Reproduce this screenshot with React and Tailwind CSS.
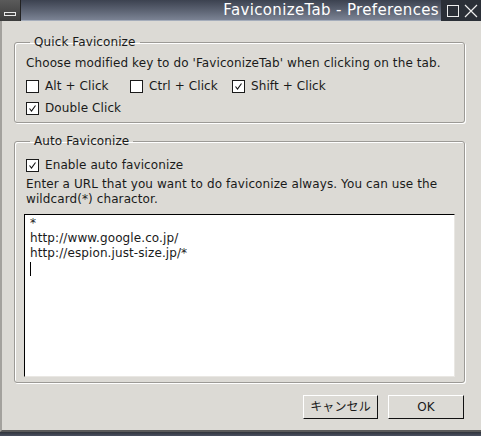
const Check = ({ checked, label }) => (
  <label className="flex items-center gap-[6px] h-[16px]">
    <span className="w-[13px] h-[13px] border border-[#1a1a1a] bg-white flex items-center justify-center">
      {checked && (
        <svg width="9" height="9" viewBox="0 0 9 9">
          <path d="M1.5 4.5 L3.5 7 L7.5 1.5" stroke="#111" strokeWidth="1.1" fill="none" />
        </svg>
      )}
    </span>
    <span>{label}</span>
  </label>
)

const Group = ({ title, className, children }) => (
  <fieldset className={`border border-[#9c9a96] rounded-[3px] shadow-[inset_1px_1px_0_#fff,1px_1px_0_#fff] px-[9px] ${className}`}>
    <legend className="px-[4px] ml-[6px] leading-[14px]">{title}</legend>
    {children}
  </fieldset>
)

const urls = ['*', 'http://www.google.co.jp/', 'http://espion.just-size.jp/*']

export default function App() {
  return (
    <div className="w-[481px] h-[436px] flex flex-col bg-[#dcdad5] text-[#1a1a1a] text-[12px] tracking-[0.1px] font-['DejaVu_Sans','Noto_Sans_CJK_JP',sans-serif] overflow-hidden">
      {/* Title bar */}
      <div className="h-[21px] flex bg-[#2b2f37] shrink-0">
        <div className="w-[21px] bg-gradient-to-b from-[#5a5a5a] to-[#3c3c3c] flex items-end justify-center pb-[5px] border-r border-[#222]">
          <span className="w-[12px] h-[4px] border border-[#e8e8e8]" />
        </div>
        <div className="flex-1 bg-gradient-to-b from-[#3c4250] to-[#7b8394] border-b border-[#a5adbb] flex items-center justify-end pr-[2px] text-white text-[15px] tracking-[0.35px] leading-none">
          FaviconizeTab - Preferences
        </div>
        <div className="w-[40px] flex items-center justify-center gap-[5px] pl-[2px]">
          <span className="w-[12px] h-[12px] border border-[#eee]" />
          <svg width="14" height="14" viewBox="0 0 14 14">
            <path d="M1 1 L13 13 M13 1 L1 13" stroke="#eee" strokeWidth="1.2" />
          </svg>
        </div>
      </div>

      {/* Body */}
      <div className="h-[411px] shrink-0 flex flex-col border-l-2 border-[#a3a19d] border-b-2 border-b-[#5a5a5a] pl-[12px] pr-[16px] pt-[14px]">
        <Group title="Quick Faviconize" className="pb-[6px]">
          <p className="mt-[6px] ml-[2px] leading-[16px] whitespace-nowrap">Choose modified key to do 'FaviconizeTab' when clicking on the tab.</p>
          <div className="flex mt-[7px] ml-[2px]">
            <div className="w-[104px]"><Check label="Alt + Click" /></div>
            <div className="w-[102px]"><Check label="Ctrl + Click" /></div>
            <Check checked label="Shift + Click" />
          </div>
          <div className="mt-[6px] ml-[2px]">
            <Check checked label="Double Click" />
          </div>
        </Group>

        <Group title="Auto Faviconize" className="mt-[11px] pb-[5px]">
          <div className="mt-[9px] ml-[2px]">
            <Check checked label="Enable auto faviconize" />
          </div>
          <p className="mt-[4px] ml-[2px] leading-[15px]">
            Enter a URL that you want to do faviconize always. You can use the wildcard(*) charactor.
          </p>
          <div className="mt-[7px] h-[163px] bg-white border border-[#000] border-r-[#e9e7e3] border-b-[#e9e7e3] px-[5px] py-[1px] leading-[15px]">
            {urls.map((u) => (
              <div key={u}>{u}</div>
            ))}
            <div className="h-[15px] flex items-center">
              <span className="w-[1px] h-[14px] bg-black" />
            </div>
          </div>
        </Group>

        <div className="flex justify-end gap-[10px] mt-[12px] pr-[1px]">
          <button className="w-[75px] h-[24px] bg-[#dcdad5] border border-white border-r-[#111] border-b-[#111]">キャンセル</button>
          <button className="w-[76px] h-[24px] bg-[#dcdad5] border border-white border-r-[#111] border-b-[#111]">OK</button>
        </div>
      </div>

      <div className="flex-1 bg-gradient-to-b from-[#30343c] to-[#4a5060]" />
    </div>
  )
}
